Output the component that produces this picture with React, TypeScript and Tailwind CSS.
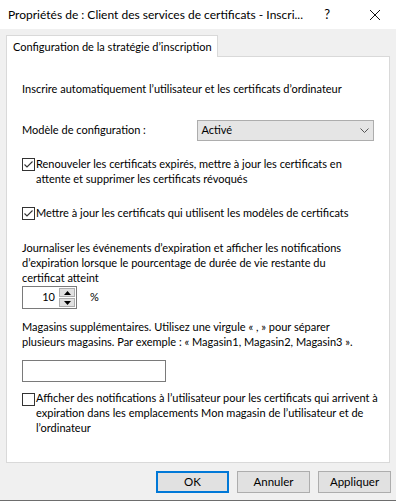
import React from 'react'

/* Case à cocher façon Windows 10 */
function CheckBox({ checked }: { checked: boolean }) {
  return (
    <div className="flex h-[13px] w-[13px] shrink-0 items-center justify-center border border-[#333333] bg-white">
      {checked && (
        <svg width="11" height="11" viewBox="0 0 11 11">
          <path d="M1.5 5.5 L4 8 L9.5 2.5" fill="none" stroke="#333333" strokeWidth="1.1" />
        </svg>
      )}
    </div>
  )
}

function CheckRow({
  checked,
  lines,
  className,
  boxOffset,
}: {
  checked: boolean
  lines: string[]
  className?: string
  boxOffset: string
}) {
  return (
    <div className={`flex gap-px ${className ?? ''}`}>
      <div className={boxOffset}>
        <CheckBox checked={checked} />
      </div>
      <p className="whitespace-nowrap leading-[15px]">
        {lines.map((l, i) => (
          <span key={i} className="block">
            {l}
          </span>
        ))}
      </p>
    </div>
  )
}

function Button({ label, focused }: { label: string; focused?: boolean }) {
  return (
    <div
      className={`flex h-[22px] w-[73px] items-center justify-center bg-[#e1e1e1] text-[11.5px] ${
        focused ? 'border-2 border-[#0078d7]' : 'border border-[#adadad]'
      }`}
    >
      {label}
    </div>
  )
}

export default function App() {
  return (
    <div className="flex h-[501px] w-[396px] flex-col bg-[#f0f0f0] font-['Lato',sans-serif] text-[11px] text-black">
      {/* Barre de titre */}
      <div className="flex h-[29px] shrink-0 items-center bg-white pl-2 text-[12px]">
        <span className="whitespace-nowrap">
          Propriétés de : Client des services de certificats - Inscri...
        </span>
        <span className="ml-auto mr-[40px] text-[13px]">?</span>
        <svg width="10" height="10" viewBox="0 0 10 10" className="mr-[16px]">
          <path d="M0 0 L10 10 M10 0 L0 10" stroke="#111" strokeWidth="1" />
        </svg>
      </div>

      <div className="px-[6px] pt-[6px]">
        {/* Onglet */}
        <div className="relative z-10 -mb-px h-[22px] w-[212px] whitespace-nowrap border border-b-0 border-[#d9d9d9] bg-white pl-[6px] leading-[21px]">
          Configuration de la stratégie d’inscription
        </div>
        {/* Panneau */}
        <div className="h-[407px] border border-[#d9d9d9] bg-white px-[15px]">
          <p className="mt-[24px] whitespace-nowrap leading-[15px]">
            Inscrire automatiquement l’utilisateur et les certificats d’ordinateur
          </p>

          <div className="mt-[24px] flex h-[21px] items-center">
            <span className="w-[180px]">Modèle de configuration :</span>
            <div className="flex h-[21px] w-[181px] items-center border border-[#adadad] bg-[#e5e5e5] pl-[3px] pr-[4px]">
              <span>Activé</span>
              <svg width="9" height="5" viewBox="0 0 9 5" className="ml-auto">
                <path d="M0.5 0.5 L4.5 4.5 L8.5 0.5" fill="none" stroke="#555" strokeWidth="1" />
              </svg>
            </div>
          </div>

          <CheckRow
            checked
            className="mt-[15px]"
            boxOffset="mt-[2px]"
            lines={[
              'Renouveler les certificats expirés, mettre à jour les certificats en',
              'attente et supprimer les certificats révoqués',
            ]}
          />

          <CheckRow
            checked
            className="mt-[19px]"
            boxOffset="mt-[2px]"
            lines={['Mettre à jour les certificats qui utilisent les modèles de certificats']}
          />

          <p className="mt-[20px] whitespace-nowrap leading-[15px]">
            Journaliser les événements d’expiration et afficher les notifications
            <br />
            d’expiration lorsque le pourcentage de durée de vie restante du
            <br />
            certificat atteint
          </p>

          {/* Zone numérique */}
          <div className="mt-px flex items-center">
            <div className="flex h-[23px] w-[55px] items-center border border-[#7a7a7a] bg-white">
              <span className="flex-1 pr-[4px] text-right">10</span>
              <div className="flex h-full w-[17px] flex-col gap-px py-px pr-px">
                <div className="flex flex-1 items-center justify-center border border-[#adadad] bg-[#e1e1e1]">
                  <svg width="7" height="4" viewBox="0 0 7 4">
                    <path d="M0 4 L3.5 0 L7 4 Z" fill="#000" />
                  </svg>
                </div>
                <div className="flex flex-1 items-center justify-center border border-[#adadad] bg-[#e1e1e1]">
                  <svg width="7" height="4" viewBox="0 0 7 4">
                    <path d="M0 0 L3.5 4 L7 0 Z" fill="#000" />
                  </svg>
                </div>
              </div>
            </div>
            <span className="ml-[13px]">%</span>
          </div>

          <p className="mt-[10px] whitespace-nowrap leading-[15px]">
            Magasins supplémentaires. Utilisez une virgule « , » pour séparer
            <br />
            plusieurs magasins. Par exemple : « Magasin1, Magasin2, Magasin3 ».
          </p>

          <div className="mt-[11px] h-[22px] w-[144px] border border-[#7a7a7a] bg-white" />

          <CheckRow
            checked={false}
            className="mt-[8px]"
            boxOffset="mt-[3px]"
            lines={[
              'Afficher des notifications à l’utilisateur pour les certificats qui arrivent à',
              'expiration dans les emplacements Mon magasin de l’utilisateur et de',
              'l’ordinateur',
            ]}
          />
        </div>
      </div>

      {/* Boutons */}
      <div className="mt-[8px] flex justify-end gap-[8px] pr-[5px]">
        <Button label="OK" focused />
        <Button label="Annuler" />
        <Button label="Appliquer" />
      </div>
      <div className="mt-auto h-px bg-[#6d6d6d]" />
    </div>
  )
}
